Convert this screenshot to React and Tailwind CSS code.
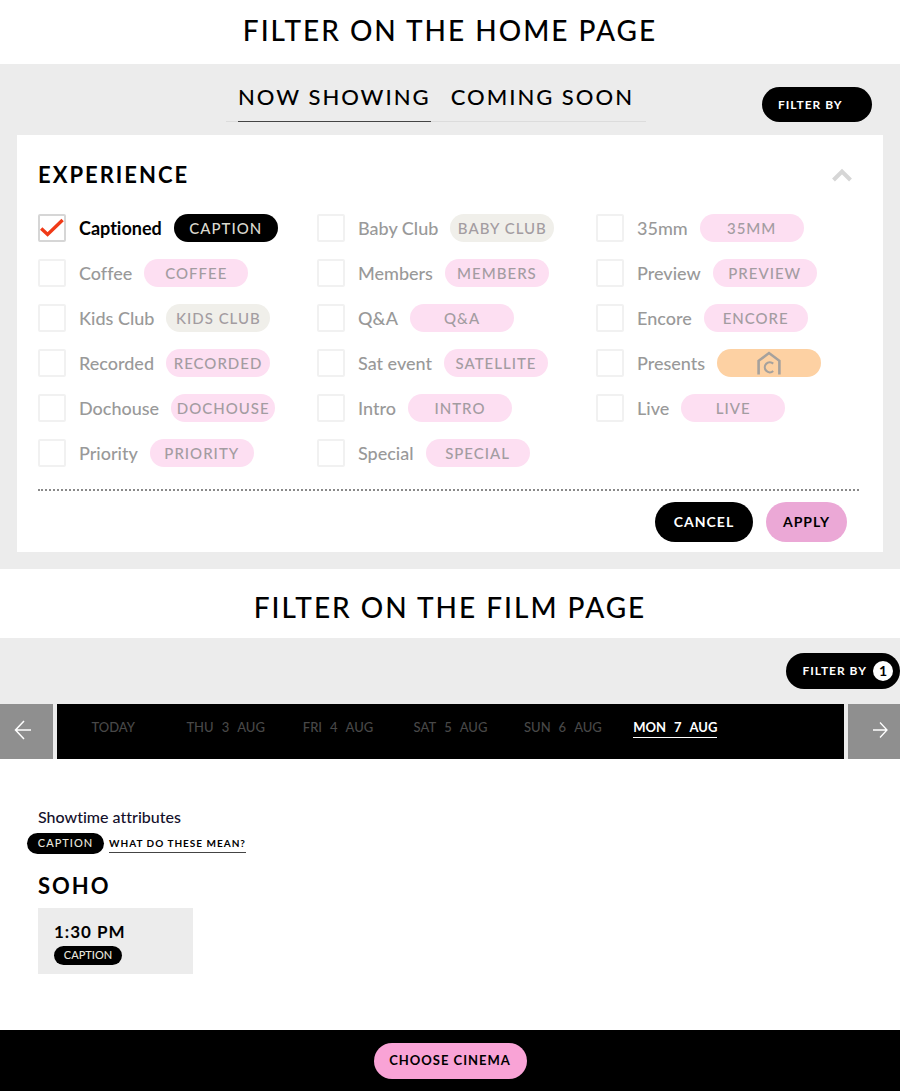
import React, { useState } from 'react';
import clsx from 'clsx';

const EXPERIENCES = [
  { id: 'captioned', label: 'Captioned', tag: 'CAPTION', tone: 'pink' },
  { id: 'baby', label: 'Baby Club', tag: 'BABY CLUB', tone: 'stone' },
  { id: '35mm', label: '35mm', tag: '35MM', tone: 'pink' },
  { id: 'coffee', label: 'Coffee', tag: 'COFFEE', tone: 'pink' },
  { id: 'members', label: 'Members', tag: 'MEMBERS', tone: 'pink' },
  { id: 'preview', label: 'Preview', tag: 'PREVIEW', tone: 'pink' },
  { id: 'kids', label: 'Kids Club', tag: 'KIDS CLUB', tone: 'stone' },
  { id: 'qa', label: 'Q&A', tag: 'Q&A', tone: 'pink' },
  { id: 'encore', label: 'Encore', tag: 'ENCORE', tone: 'pink' },
  { id: 'recorded', label: 'Recorded', tag: 'RECORDED', tone: 'pink' },
  { id: 'satellite', label: 'Sat event', tag: 'SATELLITE', tone: 'pink' },
  { id: 'presents', label: 'Presents', tag: null, tone: 'orange' },
  { id: 'dochouse', label: 'Dochouse', tag: 'DOCHOUSE', tone: 'pink' },
  { id: 'intro', label: 'Intro', tag: 'INTRO', tone: 'pink' },
  { id: 'live', label: 'Live', tag: 'LIVE', tone: 'pink' },
  { id: 'priority', label: 'Priority', tag: 'PRIORITY', tone: 'pink' },
  { id: 'special', label: 'Special', tag: 'SPECIAL', tone: 'pink' },
];

const TONES = {
  pink: 'bg-[#fddff2]',
  stone: 'bg-[#f0efea]',
  orange: 'bg-[#fdd1a3]',
};

const DAYS = [
  ['TODAY'],
  ['THU', '3', 'AUG'],
  ['FRI', '4', 'AUG'],
  ['SAT', '5', 'AUG'],
  ['SUN', '6', 'AUG'],
  ['MON', '7', 'AUG'],
];

function HouseIcon() {
  return (
    <svg width="26" height="26" viewBox="0 0 26 26" fill="none" stroke="#a5a19d" strokeWidth="2.6">
      <path d="M2.6 24.500V10.8L13 3l10.400 7.800V24.500" />
      <path d="M17.2 13.600a5 5 0 1 0 0 7.400" strokeWidth="2.2" />
    </svg>
  );
}

function PageTitle({ children, className }) {
  return (
    <h1 className={clsx('text-center text-[28px] leading-9 font-medium tracking-[2px]', className)}>
      {children}
    </h1>
  );
}

function Experience({ item, checked, onToggle }) {
  return (
    <label className="flex items-center h-7 cursor-pointer">
      <span className="relative flex shrink-0">
        <input
          type="checkbox"
          checked={checked}
          onChange={onToggle}
          className={clsx(
            'appearance-none size-7 rounded-xs border-2 bg-white',
            checked ? 'border-[#d6d6d6]' : 'border-[#f1f1f1]'
          )}
        />
        {checked && (
          <svg className="absolute inset-0 pointer-events-none" width="28" height="28" viewBox="0 0 28 28" fill="none">
            <path d="M3.2 14.500l6.400 6L24.6 6" stroke="#f03a17" strokeWidth="3.4" />
          </svg>
        )}
      </span>
      <span
        className={clsx(
          'ml-[13px] text-lg leading-7 whitespace-nowrap',
          checked ? 'font-bold text-black' : 'font-medium text-[#999]'
        )}
      >
        {item.label}
      </span>
      <span
        className={clsx(
          'ml-3 flex w-[104px] h-7 shrink-0 items-center justify-center rounded-full text-[15px] font-medium tracking-[1px]',
          checked ? 'bg-black text-[#dad8cd]' : TONES[item.tone],
          !checked && 'text-[#a39ca1]'
        )}
      >
        {item.tag || <HouseIcon />}
      </span>
    </label>
  );
}

function FilterPanel() {
  const [selected, setSelected] = useState(['captioned']);

  function toggle(id) {
    setSelected(prev => (prev.includes(id) ? prev.filter(x => x !== id) : [...prev, id]));
  }

  return (
    <form className="bg-white mx-[17px] mt-[13px] pt-6 pb-[10px] pl-[21px] pr-6" onSubmit={e => e.preventDefault()}>
      <div className="flex items-center justify-between pr-[7px]">
        <h2 className="text-[22px] leading-8 font-bold tracking-[2px]">EXPERIENCE</h2>
        <button type="button" aria-label="Collapse" className="text-[#d6d6d6]">
          <svg width="20" height="14" viewBox="0 0 20 14" fill="none" stroke="currentColor" strokeWidth="4">
            <path d="M1.5 12L10 3.5 18.5 12" />
          </svg>
        </button>
      </div>

      <div className="grid grid-cols-3 gap-x-4 gap-y-[17px] mt-[23px]">
        {EXPERIENCES.map(item => (
          <Experience
            key={item.id}
            item={item}
            checked={selected.includes(item.id)}
            onToggle={() => toggle(item.id)}
          />
        ))}
      </div>

      <div className="mt-[22px] border-t-2 border-dotted border-[#8a8a8a]" />

      <div className="flex justify-end gap-[13px] mt-[11px] pr-3 text-sm font-bold tracking-[1px]">
        <button type="button" className="w-[98px] h-10 rounded-full bg-black text-white">CANCEL</button>
        <button type="submit" className="w-[81px] h-10 rounded-full bg-[#eba8d6] text-black">APPLY</button>
      </div>
    </form>
  );
}

function DateBar() {
  return (
    <div className="flex gap-1 h-[55px]">
      <button aria-label="Previous dates" className="flex w-[53px] shrink-0 items-center bg-[#8f8f8f] pl-3.5 pb-1 text-white">
        <svg width="18" height="20" viewBox="0 0 18 20" fill="none" stroke="currentColor" strokeWidth="1.5">
          <path d="M10 1L1.5 10 10 19M1.5 10H17" />
        </svg>
      </button>
      <div className="grid grid-cols-7 flex-1 items-center justify-items-center bg-black pb-2">
        {DAYS.map((parts, i) => {
          const active = i === DAYS.length - 1;
          return (
            <button
              key={parts.join('')}
              className={clsx(
                'flex gap-2 border-b text-[13px] leading-5',
                active ? 'border-white font-bold text-white' : 'border-transparent font-medium text-[#484848]'
              )}
            >
              {parts.map(p => <span key={p}>{p}</span>)}
            </button>
          );
        })}
      </div>
      <button aria-label="Next dates" className="flex w-[52px] shrink-0 items-center justify-end bg-[#8f8f8f] pr-3 pb-1 text-white">
        <svg width="16" height="18" viewBox="0 0 16 18" fill="none" stroke="currentColor" strokeWidth="1.3">
          <path d="M8 1.5L15 9l-7 7.500M15 9H1" />
        </svg>
      </button>
    </div>
  );
}

export default function App() {
  return (
    <div className="bg-white text-black font-['Lato',sans-serif] [font-variant-ligatures:none]">
      <PageTitle className="pt-3 pb-4">FILTER ON THE HOME PAGE</PageTitle>

      <section className="bg-[#ececec] pb-[17px]">
        <div className="grid grid-cols-[1fr_auto_1fr] items-end pr-7">
          <nav className="col-start-2 flex gap-5 border-b border-[#dcdcdc] px-3 pt-[17px] text-[22px] leading-8 font-medium tracking-[2px]">
            <a href="#now" className="-mb-px border-b border-[#444] pb-2">NOW SHOWING</a>
            <a href="#soon" className="pb-2">COMING SOON</a>
          </nav>
          <button className="justify-self-end w-[110px] h-[35px] rounded-full bg-black pl-4 text-left text-xs font-bold tracking-[1px] text-white">
            FILTER BY
          </button>
        </div>
        <FilterPanel />
      </section>

      <PageTitle className="pt-5 pb-[13px]">FILTER ON THE FILM PAGE</PageTitle>

      <section className="bg-[#ececec]">
        <div className="flex justify-end pt-[15px] pb-[15px]">
          <button className="flex items-center gap-[6px] h-9 rounded-full bg-black pl-4 pr-[7px] text-xs font-bold tracking-[1px] text-white">
            FILTER BY
            <span className="flex size-5 items-center justify-center rounded-full bg-white text-sm tracking-normal text-black">1</span>
          </button>
        </div>
        <DateBar />
      </section>

      <main className="px-[38px] pt-[46px] pb-14">
        <h3 className="text-base leading-6 font-medium text-[#14102b]">Showtime attributes</h3>
        <div className="flex items-center gap-[5px] -ml-[11px] mt-1">
          <span className="flex w-[77px] h-[21px] items-center justify-center rounded-full bg-black text-[11px] font-medium tracking-[1px] text-[#e8e6df]">
            CAPTION
          </span>
          <a href="#attributes" className="border-b border-[#444] text-[10px] leading-[18px] font-bold tracking-[1px]">
            WHAT DO THESE MEAN?
          </a>
        </div>

        <h2 className="mt-4 text-[22px] leading-8 font-bold tracking-[2px]">SOHO</h2>
        <a href="#showtime" className="mt-1.5 block w-[155px] bg-[#ececec] px-4 pt-3 pb-[9px]">
          <span className="block text-[17px] leading-6 font-bold tracking-[1px]">1:30 PM</span>
          <span className="mt-0.5 flex w-[68px] h-[19px] items-center justify-center rounded-full bg-black text-[11px] font-medium text-[#e8e6df]">
            CAPTION
          </span>
        </a>
      </main>

      <footer className="flex justify-center bg-black pt-[13px] pb-3">
        <button className="w-[153px] h-9 rounded-full bg-[#f9a3d6] text-[13px] font-bold tracking-[1px] text-black">
          CHOOSE CINEMA
        </button>
      </footer>
    </div>
  );
}
